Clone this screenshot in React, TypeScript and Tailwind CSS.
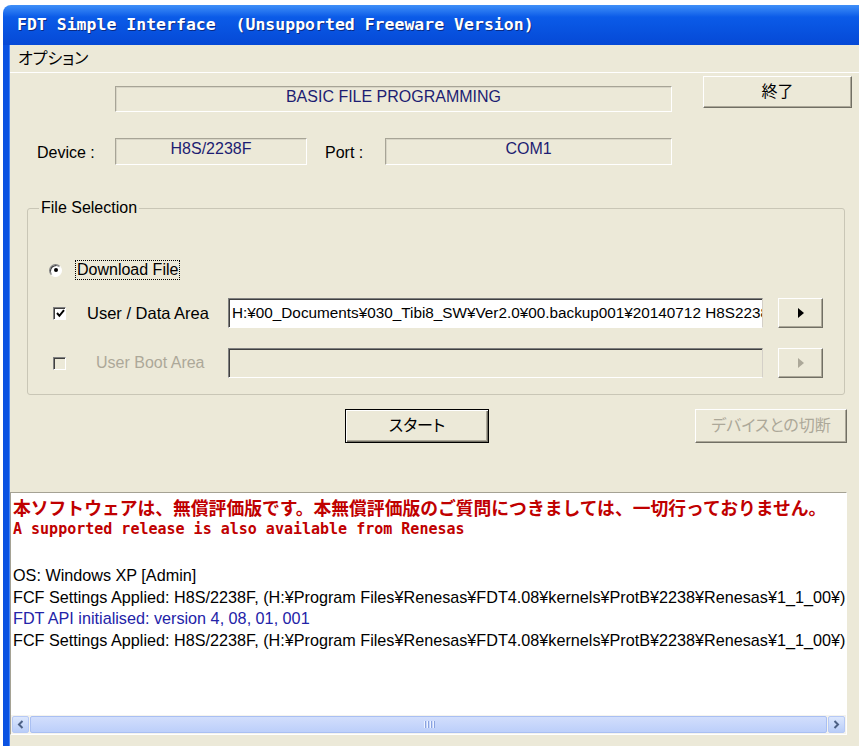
import React from "react";

const ui = "font-['Liberation_Sans','Noto_Sans_CJK_JP',sans-serif] [font-feature-settings:'palt']";
const mono = "font-['DejaVu_Sans_Mono','Noto_Sans_CJK_JP',monospace]";

// classic raised push button
function PushButton({
  label,
  width,
  isDefault = false,
  disabled = false,
  className = "",
}: {
  label: string;
  width: string;
  isDefault?: boolean;
  disabled?: boolean;
  className?: string;
}) {
  const frame = isDefault
    ? "border border-black shadow-[inset_1px_1px_0_#ffffff,inset_-1px_-1px_0_#716f64,inset_-2px_-2px_0_#aca899]"
    : "border border-t-white border-l-white border-b-[#716f64] border-r-[#716f64] shadow-[inset_-1px_-1px_0_#aca899]";
  return (
    <div
      className={`${width} h-[34px] bg-[#ece9d8] flex items-center justify-center text-[16px] leading-none ${frame} ${
        disabled ? "text-[#aca899]" : "text-black"
      } ${className}`}
    >
      {label}
    </div>
  );
}

function ArrowButton({ disabled = false }: { disabled?: boolean }) {
  return (
    <div className="ml-[15px] w-[45px] h-[30px] bg-[#ece9d8] border border-t-white border-l-white border-b-[#716f64] border-r-[#716f64] shadow-[inset_-1px_-1px_0_#aca899] flex items-center justify-center">
      <svg width="6" height="10" viewBox="0 0 6 10">
        <path d="M0 0 L6 5 L0 10 Z" fill={disabled ? "#aca899" : "#000000"} />
      </svg>
    </div>
  );
}

function CheckBox({ checked, disabled = false }: { checked: boolean; disabled?: boolean }) {
  return (
    <div
      className={`w-[13px] h-[13px] shrink-0 border border-t-[#808080] border-l-[#808080] border-b-white border-r-white shadow-[inset_1px_1px_0_#404040] flex items-center justify-center ${
        disabled ? "bg-[#ece9d8]" : "bg-white"
      }`}
    >
      {checked && (
        <svg width="9" height="9" viewBox="0 0 9 9" className="ml-[1px] mt-[1px]">
          <path d="M1 4 L3.4 6.8 L8 1.2" stroke="#000" strokeWidth="2" fill="none" />
        </svg>
      )}
    </div>
  );
}

function StaticBox({ text, width, className = "" }: { text: string; width: string; className?: string }) {
  return (
    <div
      className={`${width} border border-t-[#a7a496] border-l-[#a7a496] border-b-white border-r-white shadow-[inset_1px_1px_0_#d8d5c6] flex justify-center pt-[1px] text-[16px] leading-[18px] text-[#1d1d72] ${className}`}
    >
      {text}
    </div>
  );
}

function ScrollArrow({ dir }: { dir: "left" | "right" }) {
  return (
    <div className="w-[17px] h-[17px] rounded-[2px] border border-[#b6c9f5] bg-gradient-to-b from-[#dce7fd] to-[#b9cdf8] flex items-center justify-center">
      <svg width="7" height="9" viewBox="0 0 7 9">
        <path
          d={dir === "left" ? "M5.5 1 L2 4.5 L5.5 8" : "M1.5 1 L5 4.5 L1.5 8"}
          stroke="#4d6185"
          strokeWidth="2"
          fill="none"
        />
      </svg>
    </div>
  );
}

export default function App() {
  const logLines = [
    { text: "OS: Windows XP [Admin]", color: "text-black" },
    {
      text: "FCF Settings Applied: H8S/2238F, (H:¥Program Files¥Renesas¥FDT4.08¥kernels¥ProtB¥2238¥Renesas¥1_1_00¥)",
      color: "text-black",
    },
    { text: "FDT API initialised: version 4, 08, 01, 001", color: "text-[#2323a8]" },
    {
      text: "FCF Settings Applied: H8S/2238F, (H:¥Program Files¥Renesas¥FDT4.08¥kernels¥ProtB¥2238¥Renesas¥1_1_00¥)",
      color: "text-black",
    },
  ];

  return (
    <div className={`w-[859px] h-[746px] overflow-hidden bg-white pt-[5px] pl-[3px] ${ui}`}>
      <div className="flex flex-col h-[741px]">
        {/* title bar */}
        <div className="h-[40px] shrink-0 rounded-tl-[8px] bg-gradient-to-b from-[#3f8ff8] via-[#0b5be8] via-30% to-[#0649d6] flex items-center pl-[14px]">
          <span
            className={`${mono} text-[16.5px] font-bold text-white whitespace-pre [text-shadow:1px_1px_0_#0b2a82]`}
          >
            FDT Simple Interface  (Unsupported Freeware Version)
          </span>
        </div>

        <div className="flex flex-1">
          {/* window frame, left edge */}
          <div className="w-[7px] bg-[#0a52e2] border-r border-[#4a86f2]" />

          {/* client area */}
          <div className="flex-1 bg-[#ece9d8] flex flex-col text-black">
            {/* menu */}
            <div className="h-[28px] shrink-0 flex items-center pl-[8px] text-[16px] border-b border-white">
              オプション
            </div>

            {/* mode + exit */}
            <div className="mt-[3px] flex items-start">
              <StaticBox text="BASIC FILE PROGRAMMING" width="w-[557px]" className="ml-[105px] mt-[10px] h-[26px]" />
              <div className="ml-[31px] w-[149px] h-[32px] bg-[#ece9d8] border border-t-white border-l-white border-b-[#716f64] border-r-[#716f64] shadow-[inset_-1px_-1px_0_#aca899] flex items-center justify-center text-[16px] leading-none">
                終了
              </div>
            </div>

            {/* device / port */}
            <div className="mt-[26px] flex items-center h-[27px] text-[16px]">
              <div className="ml-[27px] w-[78px] pt-[3px]">Device :</div>
              <StaticBox text="H8S/2238F" width="w-[192px]" className="h-[27px]" />
              <div className="ml-[18px] w-[60px] pt-[3px]">Port :</div>
              <StaticBox text="COM1" width="w-[287px]" className="h-[27px]" />
            </div>

            {/* file selection group */}
            <fieldset className="mt-[34px] ml-[17px] w-[818px] border border-[#c9c6b6] rounded-[3px] pb-[16px] text-[16px]">
              <legend className="ml-[11px] px-[2px] leading-[18px]">File Selection</legend>

              <div className="mt-[43px] h-[20px] flex items-center">
                <div className="ml-[21px] w-[13px] h-[13px] rounded-full border border-t-[#808080] border-l-[#808080] border-b-white border-r-white bg-white shadow-[inset_1px_1px_0_#404040] flex items-center justify-center">
                  <div className="w-[4px] h-[4px] rounded-full bg-black" />
                </div>
                <div className="ml-[13px] px-[1px] border border-dotted border-black leading-[18px]">Download File</div>
              </div>

              <div className="mt-[18px] h-[30px] flex items-center">
                <div className="ml-[25px]">
                  <CheckBox checked />
                </div>
                <div className="ml-[21px] w-[141px] text-[16.5px]">User / Data Area</div>
                <div className="w-[535px] h-[30px] bg-white border border-t-[#808080] border-l-[#808080] border-b-white border-r-[#d4d0c8] shadow-[inset_1px_1px_0_#404040] pl-[3px] flex items-center overflow-hidden whitespace-nowrap text-[15.3px]">
                  H:¥00_Documents¥030_Tibi8_SW¥Ver2.0¥00.backup001¥20140712 H8S2238F
                </div>
                <ArrowButton />
              </div>

              <div className="mt-[20px] h-[30px] flex items-center">
                <div className="ml-[25px]">
                  <CheckBox checked={false} disabled />
                </div>
                <div className="ml-[30px] w-[132px] text-[#aca899]">User Boot Area</div>
                <div className="w-[535px] h-[30px] bg-[#ece9d8] border border-t-[#808080] border-l-[#808080] border-b-white border-r-[#d4d0c8] shadow-[inset_1px_1px_0_#404040]" />
                <ArrowButton disabled />
              </div>
            </fieldset>

            {/* actions */}
            <div className="mt-[14px] flex">
              <PushButton label="スタート" width="w-[144px]" isDefault className="ml-[335px]" />
              <PushButton label="デバイスとの切断" width="w-[152px]" disabled className="ml-[206px]" />
            </div>

            {/* message log */}
            <div className="mt-[49px] w-[837px] h-[243px] bg-white border border-t-[#a5a294] border-l-[#a5a294] border-b-white border-r-white flex flex-col">
              <div className="flex-1 overflow-hidden pl-[2px] pt-[3px] whitespace-nowrap">
                <div className="font-['Noto_Sans_CJK_JP',sans-serif] [font-feature-settings:normal] font-bold text-[17.8px] leading-[22px] text-[#c00000]">
                  本ソフトウェアは、無償評価版です。本無償評価版のご質問につきましては、一切行っておりません。
                </div>
                <div className={`${mono} font-bold text-[15px] leading-[23px] text-[#c00000]`}>
                  A supported release is also available from Renesas
                </div>
                <div className="h-[24px]" />
                {logLines.map((l, i) => (
                  <div key={i} className={`text-[16.2px] leading-[21.5px] ${l.color}`}>
                    {l.text}
                  </div>
                ))}
              </div>

              {/* horizontal scroll bar */}
              <div className="h-[19px] shrink-0 flex items-center px-[1px] gap-[1px] bg-[#f4f3ee]">
                <ScrollArrow dir="left" />
                <div className="flex-1 h-[17px] rounded-[2px] border border-[#a9bff2] bg-gradient-to-b from-[#d2defc] to-[#bccffa] flex items-center justify-center gap-[2px]">
                  {[0, 1, 2, 3].map((k) => (
                    <div key={k} className="w-[1px] h-[7px] bg-[#eef3fe] shadow-[1px_0_0_#8aa3e0]" />
                  ))}
                </div>
                <ScrollArrow dir="right" />
              </div>
            </div>
          </div>
        </div>
      </div>
    </div>
  );
}
